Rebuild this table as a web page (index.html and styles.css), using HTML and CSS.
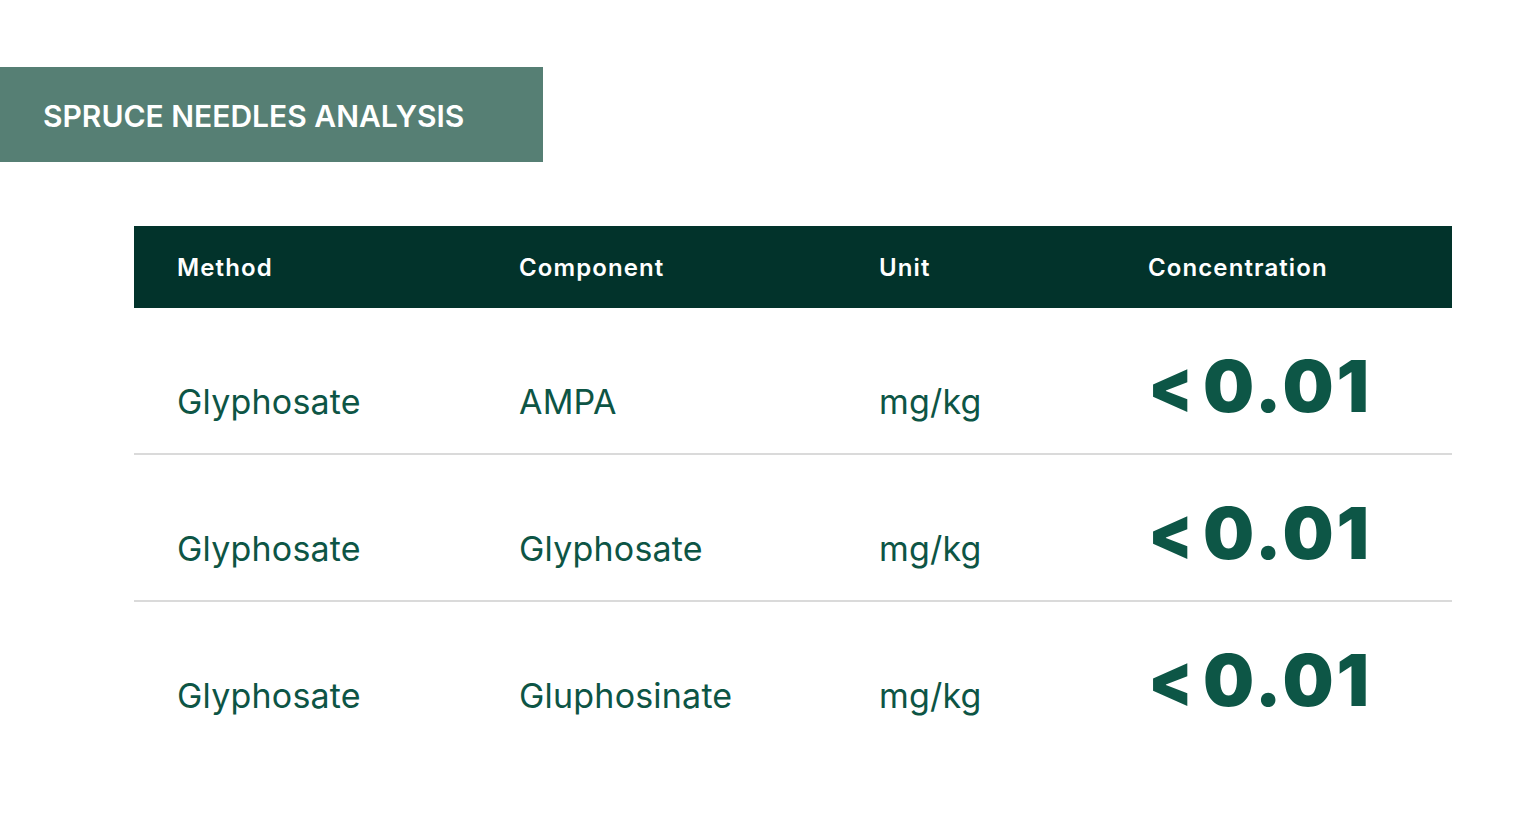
FILE: index.html
```html
<!DOCTYPE html>
<html lang="en">
<head>
<meta charset="utf-8">
<title>Spruce Needles Analysis</title>
<link rel="stylesheet" href="styles.css">
</head>
<body>
<div class="banner"><h1 class="banner-title">SPRUCE NEEDLES ANALYSIS</h1></div>
<div class="table">
  <div class="thead">
    <div class="cell">Method</div>
    <div class="cell">Component</div>
    <div class="cell">Unit</div>
    <div class="cell">Concentration</div>
  </div>
  <div class="row">
    <div class="cell">Glyphosate</div>
    <div class="cell">AMPA</div>
    <div class="cell">mg/kg</div>
    <div class="cell value"><span class="lt">&lt;</span>0.01</div>
  </div>
  <div class="row">
    <div class="cell">Glyphosate</div>
    <div class="cell">Glyphosate</div>
    <div class="cell">mg/kg</div>
    <div class="cell value"><span class="lt">&lt;</span>0.01</div>
  </div>
  <div class="row last">
    <div class="cell">Glyphosate</div>
    <div class="cell">Gluphosinate</div>
    <div class="cell">mg/kg</div>
    <div class="cell value"><span class="lt">&lt;</span>0.01</div>
  </div>
</div>
</body>
</html>
```
FILE: styles.css
```css
* { box-sizing: border-box; }
html, body { margin: 0; padding: 0; background: #ffffff; }
body { font-family: Inter, "Noto Sans", sans-serif; width: 1536px; height: 832px; overflow: hidden; }

.banner {
  margin-top: 67px;
  width: 543px;
  height: 95px;
  background: #567f74;
  display: flex;
  align-items: center;
  padding-left: 43px;
}
.banner-title {
  margin: 0;
  color: #ffffff;
  font-size: 30px;
  font-weight: 600;
  letter-spacing: 0;
  padding-top: 2px;
}

.table {
  margin-left: 134px;
  margin-top: 64px;
  width: 1318px;
}
.thead, .row {
  display: grid;
  grid-template-columns: 342px 360px 269px 1fr;
  padding-left: 43px;
}
.thead {
  height: 82px;
  background: #02332b;
  align-items: center;
  color: #ffffff;
  font-size: 24px;
  font-weight: 600;
  letter-spacing: 1.1px;
}
.row {
  height: 147px;
  padding-top: 42px;
  align-items: baseline;
  border-bottom: 2px solid #dadada;
  color: #0d5545;
  font-size: 34px;
  letter-spacing: 0.2px;
  line-height: 1;
}
.row.last { border-bottom: none; }
.row .cell:not(.value) { position: relative; top: 2px; }
.value {
  font-size: 72px;
  font-weight: 900;
  color: #0d5646;
  letter-spacing: 3px;
  display: flex;
  align-items: baseline;
}
.lt {
  display: inline-block;
  width: 55px;
  letter-spacing: 0;
  transform: scaleX(0.9);
  transform-origin: left center;
}
```
